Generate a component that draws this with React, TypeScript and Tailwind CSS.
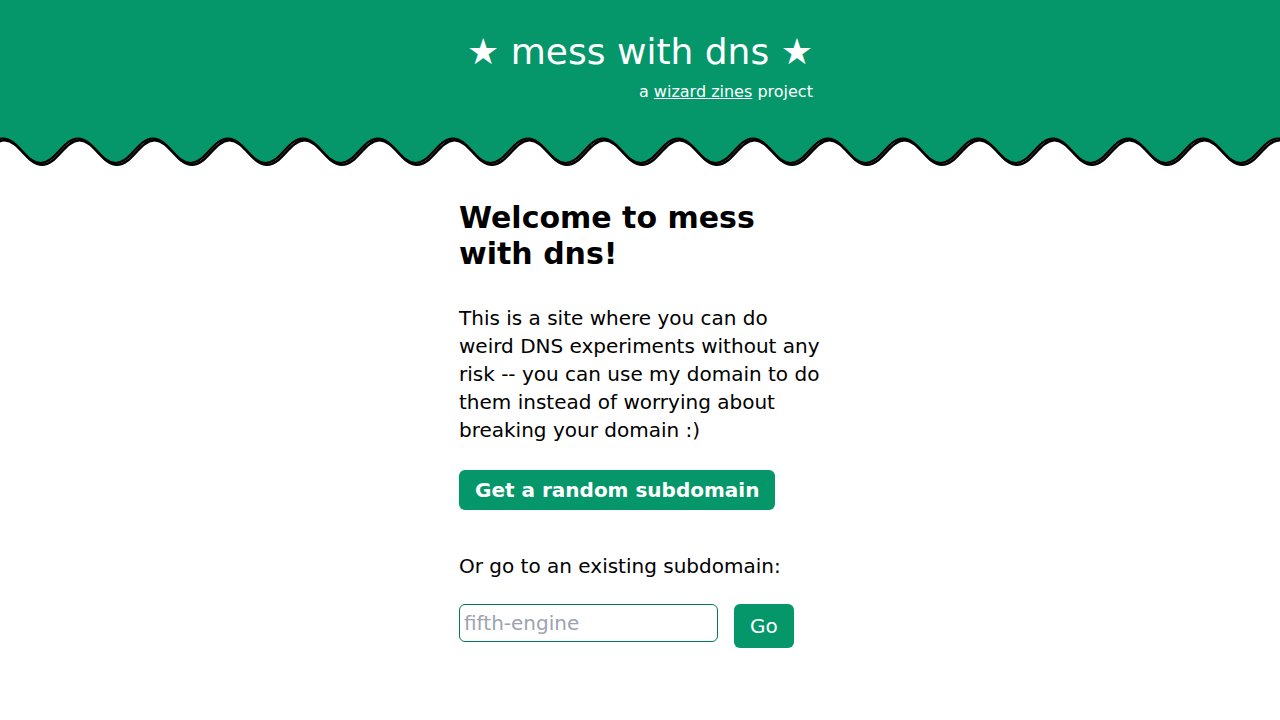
import React from "react";

function wavePath(): { line: string; fill: string } {
  const period = 75;
  const yTop = 8.5;
  const yBot = 33;
  const start = 3 - period * 2;
  let d = `M ${start} ${yTop}`;
  let x = start;
  while (x < 1280 + period) {
    const h = period / 2;
    d += ` C ${x + h * 0.4} ${yTop} ${x + h * 0.6} ${yBot} ${x + h} ${yBot}`;
    d += ` C ${x + h * 1.4} ${yBot} ${x + h * 1.6} ${yTop} ${x + period} ${yTop}`;
    x += period;
  }
  const fill = `${d} L ${x} 0 L ${start} 0 Z`;
  return { line: d, fill };
}

const { line, fill } = wavePath();

export default function App() {
  return (
    <div
      className="min-h-screen bg-white text-black"
      style={{ fontFamily: '"DejaVu Sans", Verdana, sans-serif' }}
    >
      <header className="bg-[#059669] h-[130px] flex justify-center pt-[32px]">
        <div className="flex flex-col">
          <h1 className="text-[36px] leading-[40px] text-white">★ mess with dns ★</h1>
          <p className="text-right text-white text-[16px] leading-[24px] mt-[8px]">
            a <a href="#" className="underline">wizard zines</a> project
          </p>
        </div>
      </header>
      <svg width="1280" height="40" viewBox="0 0 1280 40" className="block">
        <path d={fill} fill="#059669" />
        <path d={line} fill="none" stroke="#000" strokeWidth="2.5" transform="translate(1.5,1.8)" />
        <path d={line} fill="none" stroke="#000" strokeWidth="2.2" />
      </svg>
      <main className="flex justify-center pt-[30px]">
        <div className="w-[362px] flex flex-col items-start">
          <h2 className="text-[30px] leading-[36px] font-bold">Welcome to mess with dns!</h2>
          <p className="text-[20px] leading-[28px] mt-[32px]">
            This is a site where you can do weird DNS experiments without any risk -- you can use my domain to do them instead of worrying about breaking your domain :)
          </p>
          <button className="mt-[26px] bg-[#059669] text-white font-bold text-[20px] leading-[28px] px-4 py-1.5 rounded-md">
            Get a random subdomain
          </button>
          <p className="text-[20px] leading-[28px] mt-[42px]">Or go to an existing subdomain:</p>
          <div className="flex items-start gap-4 mt-[24px]">
            <input
              type="text"
              placeholder="fifth-engine"
              className="w-[259px] border border-[#047857] rounded-md px-1 py-1 text-[20px] leading-[28px] placeholder:text-[#9ca3af] outline-none"
              style={{ fontFamily: '"DejaVu Sans", Verdana, sans-serif' }}
            />
            <button className="bg-[#059669] text-white text-[20px] leading-[28px] px-4 py-2 rounded-md">
              Go
            </button>
          </div>
        </div>
      </main>
    </div>
  );
}
